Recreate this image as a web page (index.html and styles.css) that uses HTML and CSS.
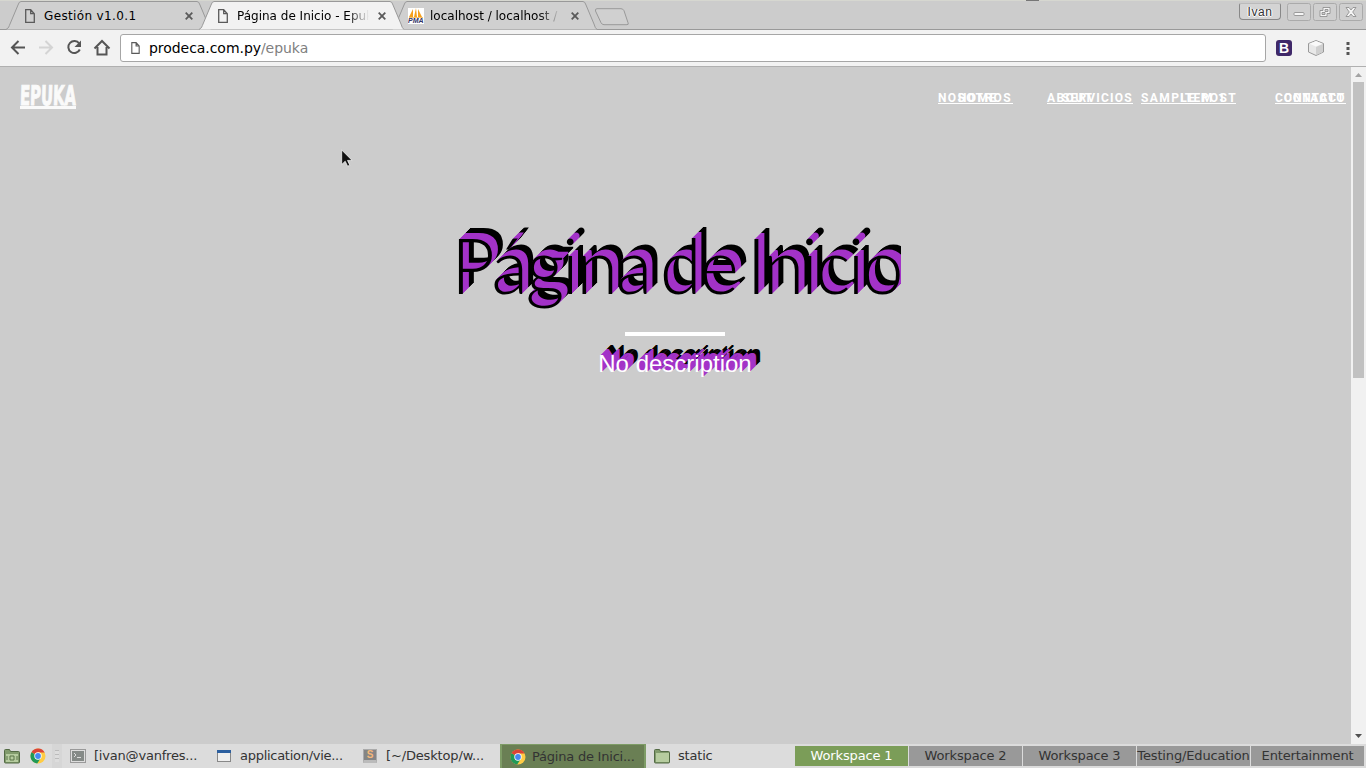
FILE: index.html
```html
<!DOCTYPE html>
<html lang="es">
<head>
<meta charset="utf-8">
<title>Página de Inicio - Epuka</title>
<link rel="stylesheet" href="styles.css">
</head>
<body>
<div class="desktop">
  <header class="tabstrip">
    <span class="sliver"></span>
    <div class="tab">
      <svg class="tab-shape" viewBox="0 0 205 30"><path d="M0 29.5C3 28 3 26 4 24L12 5Q13 1.5 15 1.5H191Q193 1.5 194 5L202 24Q203 28 205 29.5"/></svg>
      <svg class="doc" viewBox="0 0 10 14"><path d="M.7.7h5l3.6 4v8.6H.7zM5.7.7v4h3.6"/></svg>
      <span class="label t1">Gestión v1.0.1</span>
      <svg class="close" viewBox="0 0 8 8"><path d="M.7.7l6.6 6.6M7.3.7L.7 7.3"/></svg>
    </div>
    <div class="tab active">
      <svg class="tab-shape" viewBox="0 0 205 30"><path d="M0 29.5C3 28 3 26 4 24L12 5Q13 1.5 15 1.5H191Q193 1.5 194 5L202 24Q203 28 205 29.5"/></svg>
      <svg class="doc" viewBox="0 0 10 14"><path d="M.7.7h5l3.6 4v8.6H.7zM5.7.7v4h3.6"/></svg>
      <span class="label fade">Página de Inicio - Epuka</span>
      <svg class="close" viewBox="0 0 8 8"><path d="M.7.7l6.6 6.6M7.3.7L.7 7.3"/></svg>
    </div>
    <div class="tab last">
      <svg class="tab-shape" viewBox="0 0 205 30"><path d="M0 29.5C3 28 3 26 4 24L12 5Q13 1.5 15 1.5H191Q193 1.5 194 5L202 24Q203 28 205 29.5"/></svg>
      <span class="pma"><svg viewBox="0 0 16 10"><path fill="#f7a11b" d="M1 9L5 1v8zM6 9L8 0l1 9zM10 9V1l4 8z"/><path stroke="#f5c46f" d="M1 9.500h14"/></svg><b>PMA</b></span>
      <span class="label fade">localhost / localhost / p</span>
      <svg class="close" viewBox="0 0 8 8"><path d="M.7.7l6.6 6.6M7.3.7L.7 7.3"/></svg>
    </div>
    <svg class="newtab" viewBox="0 0 36 18"><path d="M3 .7h24q2 0 3 2l4 12q1 2-1 2H10q-2 0-3-2L1.500 3Q1 .7 3 .7z"/></svg>
    <div class="window-buttons">
      <span class="user">Ivan</span>
      <svg class="wb" viewBox="0 0 24 18"><rect class="frame" x=".5" y=".5" width="23" height="17" rx="2"/><rect class="glyph" x="7" y="9.500" width="10" height="3" rx="1"/></svg>
      <svg class="wb" viewBox="0 0 24 18"><rect class="frame" x=".5" y=".5" width="23" height="17" rx="2"/><path class="glyph" d="M10 4.500h7v6h-3v3H7v-6h3zM12 6.500h3v2h-3zM9 9.500h3v2H9z"/></svg>
      <svg class="wb" viewBox="0 0 24 18"><rect class="frame" x=".5" y=".5" width="23" height="17" rx="2"/><path class="glyph" d="M7 4.500h3l2 2.500 2-2.500h3l-3.300 4.500 3.300 4.500h-3L12 11l-2 2.500H7L10.300 9z"/></svg>
    </div>
  </header>
  <div class="toolbar">
    <svg class="nav-icons" viewBox="0 0 112 36"><g fill="none" stroke="#555" stroke-width="2"><path d="M25 17.500H12.500M18.500 11l-6.500 6.500 6.500 6.500"/><path stroke="#d4d4d4" d="M39 17.500h12.500M45.500 11l6.500 6.500-6.500 6.500"/><path d="M79.200 13.500A6 6 0 1 0 79.800 19.500"/><path d="M94.500 18.500L102 11l7.500 7.500M97.500 17v7.500h9V17"/></g><path fill="#555" d="M81 10.500v6.500h-6.500z"/></svg>
    <div class="omnibox">
      <svg class="doc small" viewBox="0 0 10 14"><path d="M.7.7h5l3.600 4v8.600H.7zM5.700.7v4h3.600"/></svg>
      <span class="url">prodeca.com.py<i>/epuka</i></span>
    </div>
    <span class="boot">B</span>
    <svg class="cube" viewBox="0 0 16 16"><path fill="#e8e8e8" stroke="#999" d="M8 .5l7.500 3v8.500L8 15.500.5 12V3.500z"/><path fill="#fafafa" d="M8 1l6.500 2.800L8 6.500 1.500 3.800z"/><path fill="#cfcfcf" d="M8 7l7-3v8l-7 3z"/></svg>
    <svg class="dots" viewBox="0 0 4 14"><path fill="#555" d="M.5 1h3v3h-3zM.5 6h3v3h-3zM.5 11h3v3h-3z"/></svg>
  </div>
  <main class="viewport">
    <div class="page">
      <nav class="site-nav">
        <a class="brand"><span>EPUKA</span></a>
        <div class="menu">
          <a class="m1">NOSOTROS<span class="over home">HOME</span></a>
          <a class="m2">ABOUT<span class="over serv">SERVICIOS</span></a>
          <a class="m3">SAMPLE POST<span class="over item">ITEM 1</span></a>
          <a class="m4">CONTACTO<span class="over cont">CONTACT</span></a>
        </div>
      </nav>
      <section class="hero">
        <h1>Página de <span>Inicio</span></h1>
        <hr>
        <p>No description</p>
      </section>
      <svg class="cursor" viewBox="0 0 12 19"><path d="M.7 1v14.500l3.500-3.300 2.400 5 2.200-1-2.300-4.800h4.600z"/></svg>
    </div>
    <div class="scrollbar">
      <svg viewBox="0 0 15 15"><path fill="#a3a3a3" d="M4 10h7L7.500 6z"/></svg>
      <span class="thumb"></span>
      <svg class="down" viewBox="0 0 15 15"><path fill="#505050" d="M4 5h7L7.500 9z"/></svg>
    </div>
  </main>
  <footer class="taskbar">
    <div class="launch">
      <svg class="folder" viewBox="0 0 16 16"><path class="fb" d="M.5 2.500q0-1 1-1h4l1 2h8q1 0 1 1V14q0 1-1 1h-13q-1 0-1-1z"/><path class="ff" d="M2 6h12v8H2z"/><path fill="none" stroke="#5b7449" d="M6 8h4v4H6zM3 8v4M13 8v4"/></svg>
      <svg class="chrome" viewBox="0 0 16 16"><circle cx="8" cy="8" r="7.500" fill="#fc4"/><path fill="#db4437" d="M8 8L1.500 4.200A7.500 7.500 0 0 1 14.700 4.600H8z"/><path fill="#209957" d="M8 8l-6.500-3.800A7.500 7.500 0 0 0 7.200 15.500L11 9.700z"/><circle cx="8" cy="8" r="3.700" fill="#fff"/><circle cx="8" cy="8" r="2.900" fill="#4688f1"/></svg>
    </div>
    <div class="grip"></div>
    <div class="task k1"><svg class="term" viewBox="0 0 16 14"><rect x=".5" y=".5" width="15" height="13" fill="#ddd" stroke="#999"/><rect x="2" y="2" width="12" height="10" fill="#858a87"/><path d="M4 4l2 2-2 2M7 8.500h4" fill="none" stroke="#ddd"/></svg><span>[ivan@vanfres...</span></div>
    <div class="task k2"><svg class="win" viewBox="0 0 14 12"><rect x=".5" y=".5" width="13" height="11" fill="#eee" stroke="#888"/><path fill="#2c5f9f" d="M0 0h14v3H0z"/></svg><span>application/vie...</span></div>
    <div class="task k3"><span class="subl">S</span><span>[~/Desktop/w...</span></div>
    <div class="task k4"><svg class="chrome" viewBox="0 0 16 16"><circle cx="8" cy="8" r="7.500" fill="#fc4"/><path fill="#db4437" d="M8 8L1.500 4.200A7.500 7.500 0 0 1 14.700 4.600H8z"/><path fill="#209957" d="M8 8l-6.500-3.800A7.500 7.500 0 0 0 7.200 15.500L11 9.700z"/><circle cx="8" cy="8" r="3.700" fill="#fff"/><circle cx="8" cy="8" r="2.900" fill="#4688f1"/></svg><span>Página de Inici...</span></div>
    <div class="task k5"><svg class="folder" viewBox="0 0 16 16"><path class="fb" d="M.5 2.500q0-1 1-1h4l1 2h8q1 0 1 1V14q0 1-1 1h-13q-1 0-1-1z"/><path class="ff" d="M2 5h13v9H2z"/></svg><span>static</span></div>
    <div class="workspaces">
      <span class="on">Workspace 1</span><span>Workspace 2</span><span>Workspace 3</span><span>Testing/Education</span><span>Entertainment</span>
    </div>
  </footer>
</div>
</body>
</html>
```

FILE: styles.css
```css
* { box-sizing: border-box; }
body { margin: 0; font-family: "DejaVu Sans", sans-serif; font-size: 12px; color: #000; }
svg { display: block; flex: none; }
.desktop { width: 1366px; height: 768px; display: flex; flex-direction: column; overflow: hidden; background: #ccc; }

.tabstrip { height: 30px; display: flex; position: relative; padding-left: 6px; background: #ccc; border-top: 1px solid #d6d7d0; box-shadow: inset 0 -1px #999; flex: none; }
.sliver { position: absolute; left: 1026px; top: -1px; width: 13px; height: 1px; background: #777; }
.tab { position: relative; width: 205px; height: 30px; margin: -1px -12px 0 0; display: flex; align-items: center; padding: 2px 0 0 19px; }
.tab.active { z-index: 2; }
.tab-shape { position: absolute; left: 0; top: 0; width: 205px; height: 30px; }
.tab-shape path { fill: #d0d0d0; stroke: #999; }
.active .tab-shape path { fill: #f2f2f2; }
.doc { position: relative; width: 10px; height: 14px; }
.doc path { fill: none; stroke: #5a5a5a; stroke-width: 1.3; }
.label { position: relative; width: 132px; margin-left: 9px; white-space: nowrap; overflow: hidden; line-height: 20px; }
.t1 { letter-spacing: .36px; }
.fade { mask-image: linear-gradient(90deg, #000 84%, transparent 100%); }
.close { position: relative; width: 8px; height: 8px; margin-left: 9px; }
.close path { fill: none; stroke: #5a5a5a; stroke-width: 1.8; }
.tab.last { padding-left: 16px; margin-right: 0; }
.last .label { margin-left: 6px; width: 130px; }
.last .close { margin-left: 11px; }
.pma { position: relative; width: 16px; height: 16px; background: #fff; overflow: hidden; }
.pma svg { width: 16px; height: 10px; }
.pma b { display: block; font: italic bold 7px/6px "Liberation Sans", sans-serif; color: #336; }
.newtab { width: 36px; height: 18px; margin: 7px 0 0 -3px; }
.newtab path { fill: #d0d0d0; stroke: #999; }
.window-buttons { margin-left: auto; display: flex; gap: 2px; padding: 2px 3px 0 0; }
.user { width: 42px; height: 17px; margin-right: 4px; border: 1px solid #888; border-top-color: #bbb; border-radius: 2px 2px 4px 4px; background: #d4d4d4; text-align: center; font: 12px/16px "Liberation Sans", sans-serif; letter-spacing: .6px; color: #333; text-shadow: 0 1px #fff, 1px 0 #fff, -1px 0 #fff; }
.wb { width: 24px; height: 18px; }
.frame { fill: #cfcfcf; stroke: #aaa; }
.glyph { fill: #f5f5f5; stroke: #888; stroke-width: .8; fill-rule: evenodd; }

.toolbar { height: 37px; flex: none; display: flex; align-items: center; background: #f2f2f2; border-bottom: 1px solid #b0b0b0; }
.nav-icons { width: 112px; height: 36px; }
.omnibox { width: 1146px; height: 28px; margin-left: 8px; border: 1px solid #a6a6a6; border-radius: 3px; background: #fff; display: flex; align-items: center; }
.small { width: 9px; height: 12px; margin-left: 10px; }
.url { margin-left: 9px; font-size: 14px; line-height: 20px; letter-spacing: -.05px; }
.url i { font-style: normal; color: #808080; }
.boot { width: 16px; height: 16px; margin-left: 10px; border-radius: 3px; background: #3f2869; color: #fff; text-align: center; font: bold 14px/17px "Liberation Sans", sans-serif; }
.cube { width: 16px; height: 16px; margin-left: 16px; }
.dots { width: 4px; height: 14px; margin-left: 22px; }

.viewport { height: 677px; display: flex; flex: none; }
.page { width: 1351px; background: #ccc; position: relative; }
.site-nav { height: 156px; display: flex; justify-content: space-between; padding: 17px 5px 0 20px; color: #fff; }
.brand { width: 56px; height: 25px; border-bottom: 3px solid #fafafa; color: #fafafa; font: bold 27px/24px "DejaVu Sans Condensed", "DejaVu Sans", sans-serif; white-space: nowrap; }
.brand span { display: inline-block; transform: scaleX(.61) skewX(-3deg); transform-origin: 0 50%; -webkit-text-stroke: 1px #fafafa; }
.menu { display: flex; font: bold 12px/14px Roboto, sans-serif; letter-spacing: 1.4px; padding-top: 7px; }
.menu a { position: relative; height: 14px; white-space: nowrap; }
.menu a::after { content: ""; position: absolute; left: 0; right: 0; top: 12px; height: 1px; background: #fff; }
.m1 { width: 75px; margin-right: 34px; }
.m2 { width: 86px; margin-right: 8px; }
.m3 { width: 95px; margin-right: 39px; }
.m4 { width: 71px; letter-spacing: 1px; }
.over { position: absolute; top: 0; }
.home { left: 20px; }
.serv { left: 15px; letter-spacing: 1.2px; }
.item { left: 39px; }
.cont { left: 9px; }

.hero { display: flex; flex-direction: column; align-items: center; width: 1350px; }
.hero h1 { margin: 0 0 0 1px; height: 92px; width: 451px; padding-left: 1px; overflow: hidden; white-space: nowrap; font: 300 76px/83px Lato, sans-serif; letter-spacing: -2.5px; word-spacing: -8px;
  text-shadow: 1px -1px #a333c8, 2px -2px #a333c8, 3px -3px #a333c8, 4px -4px #a333c8, 5px -5px #a333c8, 6px -6px #a333c8, 7px -7px #000, 8px -8px #000, 9px -9px #000, 10px -10px #000, 11px -11px #000; }
.hero h1 span { letter-spacing: -3.2px; }
.hero hr { width: 100px; height: 4px; border: 0; margin: 17px 0 0; background: #fff; }
.hero p { margin: 14px 0 0; color: #fff; font: 24px/28px "Liberation Sans", sans-serif;
  text-shadow: 1px -1px #a333c8, 2px -2px #a333c8, 3px -3px #a333c8, 4px -4px #a333c8, 5px -5px #a333c8, 6px -6px #a333c8, 7px -7px #000, 8px -8px #000, 9px -9px #000, 10px -10px #000; }
.cursor { position: absolute; left: 341px; top: 82px; width: 12px; height: 19px; }
.cursor path { fill: #111; stroke: #fff; stroke-width: .7; }
.scrollbar { width: 15px; background: #f1f1f1; display: flex; flex-direction: column; align-items: center; }
.scrollbar svg { width: 15px; height: 15px; }
.thumb { width: 11px; height: 296px; background: #c1c1c1; }
.scrollbar .down { margin-top: auto; }

.taskbar { height: 24px; flex: none; display: flex; background: #dcdcdc; color: #333; font-size: 13px; line-height: 23px; }
.launch { width: 52px; display: flex; align-items: center; gap: 10px; padding-left: 4px; }
.folder, .chrome { width: 16px; height: 16px; }
.fb { fill: #819b6c; stroke: #536a44; }
.ff { fill: #b6cc9f; }
.grip { width: 10px; padding: 6px 3px; background: repeating-linear-gradient(#bbb 0 1px, #ddd 1px 4px) content-box, #d6d6d6; }
.task { display: flex; align-items: center; white-space: nowrap; flex: none; letter-spacing: -.2px; padding-bottom: 1px; }
.k1 { width: 146px; padding-left: 8px; gap: 8px; }
.k2 { width: 146px; padding-left: 9px; gap: 9px; letter-spacing: -.28px; }
.k3 { width: 146px; padding-left: 9px; gap: 9px; letter-spacing: -.15px; }
.k4 { width: 146px; padding: 0 0 0 8px; gap: 6px; background: #6a7f54; border: 1px solid #7e9c66; border-width: 1px 2px 0; letter-spacing: -.22px; }
.k5 { width: 148px; padding-left: 8px; gap: 8px; }
.term { width: 16px; height: 14px; }
.win { width: 14px; height: 12px; }
.subl { width: 14px; height: 14px; background: #858585; border: 1px solid #aaa; border-bottom: 3px solid #bbb; color: #f5b779; text-align: center; font: bold 10px/10px "Liberation Sans", sans-serif; }
.workspaces { flex: 1; display: grid; grid-template-columns: repeat(5, 113px); gap: 1px; padding: 2px 0 2px 1px; line-height: 20px; letter-spacing: -.15px; background: #dcdcdc; }
.workspaces span { background: #999; text-align: center; white-space: nowrap; }
.workspaces .on { background: #7b9d58; color: #fff; }
```
